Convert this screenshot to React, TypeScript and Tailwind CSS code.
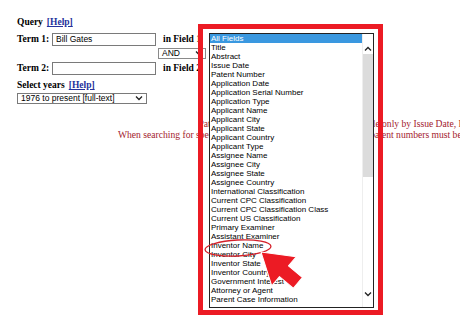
const fields = [
  'All Fields',
  'Title',
  'Abstract',
  'Issue Date',
  'Patent Number',
  'Application Date',
  'Application Serial Number',
  'Application Type',
  'Applicant Name',
  'Applicant City',
  'Applicant State',
  'Applicant Country',
  'Applicant Type',
  'Assignee Name',
  'Assignee City',
  'Assignee State',
  'Assignee Country',
  'International Classification',
  'Current CPC Classification',
  'Current CPC Classification Class',
  'Current US Classification',
  'Primary Examiner',
  'Assistant Examiner',
  'Inventor Name',
  'Inventor City',
  'Inventor State',
  'Inventor Country',
  'Government Interest',
  'Attorney or Agent',
  'Parent Case Information',
];

const Chevron = ({ up = false }: { up?: boolean }) => (
  <svg width="8" height="5" viewBox="0 0 8 5" className="block">
    <polyline
      points={up ? '1,4.5 4,1.5 7,4.5' : '1,0.5 4,3.5 7,0.5'}
      fill="none"
      stroke="#222"
      strokeWidth="1.3"
    />
  </svg>
);

const Help = () => <span className="ml-[4px] text-[#25329c] underline">[Help]</span>;

export default function App() {
  return (
    <div className="relative h-[320px] w-[460px] overflow-hidden bg-white">
      {/* search form */}
      <div className="pl-[17px] pt-[17px] font-['Liberation_Serif',serif] text-[9.5px] font-bold leading-none text-black">
        <div className="flex h-[12px] items-center">
          Query
          <Help />
        </div>

        <div className="mt-[4px] flex h-[13px] items-center">
          <span className="w-[35px]">Term 1:</span>
          <div className="flex h-[13px] w-[104px] items-center border border-[#7a7a7a] pl-[3px] font-['Liberation_Sans',sans-serif] text-[8.5px] font-normal">
            Bill Gates
          </div>
          <span className="ml-[7px] whitespace-nowrap">in Field 1</span>
        </div>

        <div className="ml-[141px] mt-[2px] flex h-[11px] w-[48px] items-center justify-between border border-[#8a8a8a] pl-[3px] pr-[2px] font-['Liberation_Sans',sans-serif] text-[8.5px] font-normal">
          AND
          <Chevron />
        </div>

        <div className="mt-[3px] flex h-[13px] items-center">
          <span className="w-[35px]">Term 2:</span>
          <div className="h-[13px] w-[104px] border border-[#7a7a7a]" />
          <span className="ml-[7px] whitespace-nowrap">in Field 2</span>
        </div>

        <div className="mt-[5px] flex h-[12px] items-center">
          Select years
          <Help />
        </div>

        <div className="mt-[1px] flex h-[11px] w-[130px] items-center justify-between border border-[#7a7a7a] pl-[3px] pr-[3px] font-['Liberation_Sans',sans-serif] text-[8.5px] font-normal">
          1976 to present [full-text]
          <Chevron />
        </div>
      </div>

      <p className="mt-[15px] w-[837px] whitespace-nowrap text-center font-['Liberation_Serif',serif] text-[9.6px] leading-[10.5px] text-[#a3222e]">
        Patents from 1790 through 1975 are searchable only by Issue Date, Patent Number, and Current US Classification.
        <br />
        When searching for specific numbers in the Patent Number field, patent numbers must be seven characters in length, excluding commas, which are optional.
      </p>

      {/* opened field list */}
      <div className="absolute left-[209px] top-[33px] flex h-[275px] w-[165px] border border-[#222] bg-white">
        <ul className="flex-1 font-['Liberation_Sans',sans-serif] text-[8px] leading-[9px] text-black">
          {fields.map((f, i) => (
            <li
              key={f}
              className={i === 0 ? 'whitespace-nowrap bg-[#3a98e0] pl-[1px] text-white' : 'whitespace-nowrap pl-[1px]'}
            >
              {f}
            </li>
          ))}
        </ul>
        <div className="flex w-[11px] flex-col items-center border-l border-[#eee] pt-[12px] pb-[10px]">
          <Chevron up />
          <div className="mt-[3px] h-[123px] w-[10px] bg-[#dcdcdc]" />
          <div className="flex-1" />
          <Chevron />
        </div>
      </div>

      {/* annotation */}
      <div className="pointer-events-none absolute left-[198px] top-[24px] h-[291px] w-[185px] border-[5px] border-[#ec1b24]" />
      <svg className="pointer-events-none absolute left-0 top-0" width="460" height="320">
        <ellipse cx="238" cy="248" rx="33" ry="8" transform="rotate(-3 238 248)" fill="none" stroke="#d4202a" strokeWidth="1.3" />
        <g transform="translate(261 252) rotate(40)">
          <polygon
            points="0,0 30,-19 30,-7 48,-7 48,7 30,7 30,19"
            fill="#ec1b24"
            stroke="#fff"
            strokeWidth="1"
            strokeLinejoin="round"
          />
        </g>
      </svg>
    </div>
  );
}
